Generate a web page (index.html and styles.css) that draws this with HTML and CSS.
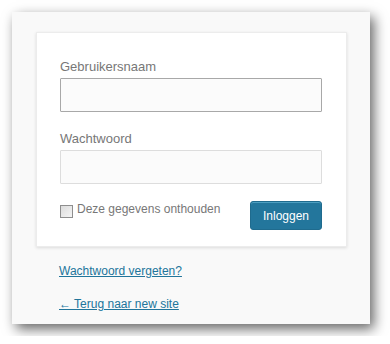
FILE: index.html
```html
<!DOCTYPE html>
<html lang="nl">
<head>
<meta charset="utf-8">
<title>Inloggen</title>
<link rel="stylesheet" href="styles.css">
</head>
<body>
<div class="window">
  <form class="card">
    <label class="field-label">Gebruikersnaam</label>
    <div class="input input-focus"></div>
    <label class="field-label second">Wachtwoord</label>
    <div class="input"></div>
    <div class="actions">
      <div class="remember"><span class="checkbox"></span><span class="remember-text">Deze gegevens onthouden</span></div>
      <button type="button" class="btn">Inloggen</button>
    </div>
  </form>
  <div class="links">
    <a href="#" class="link">Wachtwoord vergeten?</a>
    <a href="#" class="link">← Terug naar new site</a>
  </div>
</div>
</body>
</html>
```
FILE: styles.css
```css
html, body {
  margin: 0;
  padding: 0;
  background: #ffffff;
}
body {
  font-family: "Liberation Sans", Arial, sans-serif;
}
.window {
  margin: 12px;
  width: 358px;
  height: 312px;
  box-sizing: border-box;
  padding: 20px 0 0 24px;
  background: #f9f9f9;
  box-shadow: 4px 5px 12px rgba(0, 0, 0, 0.6);
}
.card {
  width: 311px;
  box-sizing: border-box;
  margin: 0;
  padding: 26px 24px 16px 23px;
  background: #ffffff;
  border: 1px solid #ececec;
  box-shadow: 0 1px 3px rgba(0, 0, 0, 0.12);
  display: flex;
  flex-direction: column;
}
.field-label {
  font-size: 13px;
  line-height: 15px;
  color: #777777;
  margin-bottom: 4px;
}
.field-label.second {
  margin-top: 19px;
}
.input {
  height: 34px;
  box-sizing: border-box;
  border: 1px solid #dddddd;
  background: #fbfbfb;
  border-radius: 1px;
}
.input-focus {
  border-color: #a8a8a8;
}
.actions {
  display: flex;
  justify-content: space-between;
  align-items: flex-start;
  margin-top: 17px;
}
.remember {
  display: flex;
  align-items: flex-start;
  margin-top: 1px;
  gap: 4px;
}
.checkbox {
  width: 13px;
  height: 13px;
  box-sizing: border-box;
  border: 1px solid #8e8e8e;
  background: linear-gradient(135deg, #dcdcdc, #f4f4f4);
  margin-top: 3px;
}
.remember-text {
  font-size: 12px;
  line-height: 14px;
  color: #777777;
}
.btn {
  width: 72px;
  height: 29px;
  margin: 0;
  padding: 0;
  border: 1px solid #1f6b8e;
  border-radius: 3px;
  background: #23769c;
  color: #ffffff;
  font-family: "Liberation Sans", Arial, sans-serif;
  font-size: 12px;
  box-shadow: inset 0 1px 0 rgba(120, 200, 230, 0.5);
}
.links {
  display: flex;
  flex-direction: column;
  align-items: flex-start;
  gap: 19px;
  margin: 17px 0 0 23px;
}
.link {
  font-size: 12px;
  line-height: 14px;
  color: #21759b;
  text-decoration: underline;
}
```
